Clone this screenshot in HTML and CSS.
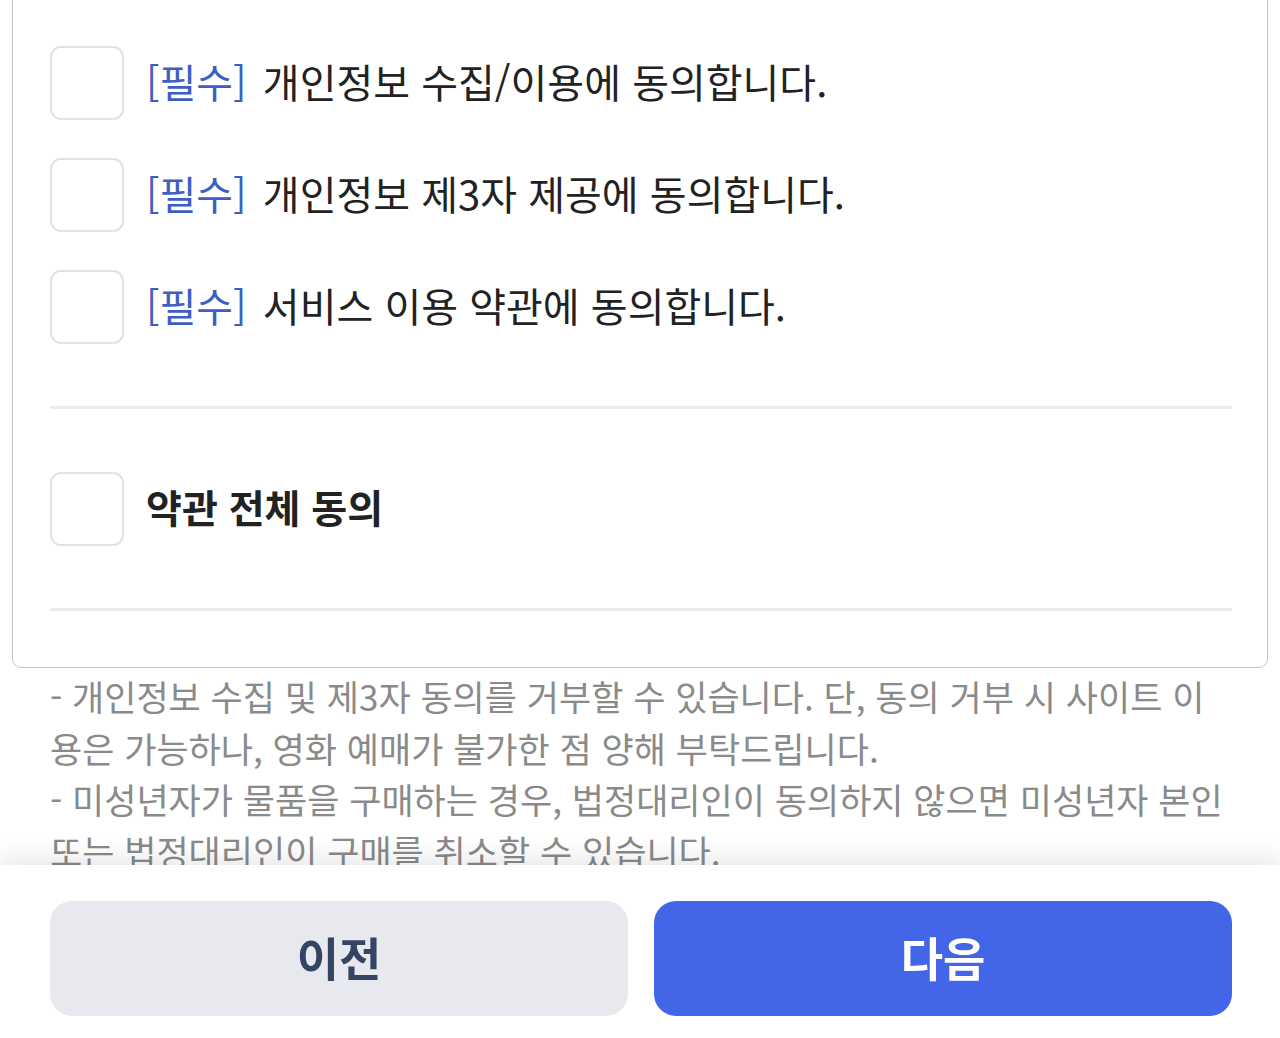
FILE: index.html
```html
<!DOCTYPE html>
<html lang="ko">

<head>
  <meta charset="UTF-8" />
  <meta name="viewport" content="width=device-width, initial-scale=1.0" />
  <title>약관 동의</title>
  <link rel="stylesheet" href="styles.css">
</head>

<body>

  <div class="terms-card">
    <ul class="terms-list">
      <li class="term">
        <span class="check"></span>
        <span class="term-text"><span class="required">[필수]</span> 개인정보 수집/이용에 동의합니다.</span>
      </li>
      <li class="term">
        <span class="check"></span>
        <span class="term-text"><span class="required">[필수]</span> 개인정보 제3자 제공에 동의합니다.</span>
      </li>
      <li class="term">
        <span class="check"></span>
        <span class="term-text"><span class="required">[필수]</span> 서비스 이용 약관에 동의합니다.</span>
      </li>
    </ul>

    <div class="divider"></div>

    <div class="term term-all">
      <span class="check"></span>
      <span class="term-text">약관 전체 동의</span>
    </div>

    <div class="divider last"></div>
  </div>

  <div class="notice">
    <p>- 개인정보 수집 및 제3자 동의를 거부할 수 있습니다. 단, 동의 거부 시 사이트 이용은 가능하나, 영화 예매가 불가한 점 양해 부탁드립니다.</p>
    <p>- 미성년자가 물품을 구매하는 경우, 법정대리인이 동의하지 않으면 미성년자 본인 또는 법정대리인이 구매를 취소할 수 있습니다.</p>
  </div>

  <!-- 하단 고정 버튼 -->
  <div class="footer">
    <button class="btn btn-prev">이전</button>
    <button class="btn btn-next">다음</button>
  </div>

</body>

</html>
```

FILE: styles.css
```css
/* 기본 */
* {
  margin: 0;
  padding: 0;
  box-sizing: border-box;
}

html,
body {
  height: 100%;
  overflow: hidden;
}

body {
  font-family: "Noto Sans CJK KR", "Noto Sans", sans-serif;
  background: #fff;
  color: #222;
}

/* 약관 카드 */
.terms-card {
  margin: -40px 12px 0 12px;
  padding: 85px 35px 56px 37px;
  border: 1.5px solid #c2c2c2;
  border-radius: 0 0 9px 9px;
}

.terms-list {
  list-style: none;
  display: flex;
  flex-direction: column;
  gap: 38px;
}

.term {
  display: flex;
  align-items: center;
  gap: 22px;
}

.check {
  width: 74px;
  height: 74px;
  flex-shrink: 0;
  border: 2px solid #e2e2e2;
  border-radius: 11px;
  background: #fff;
}

.term-text {
  font-size: 40px;
  line-height: 1;
  margin-top: -5px;
  color: #222;
}

.required {
  color: #3d5fc4;
  margin-right: 5px;
}

.term-all .term-text {
  font-size: 39px;
  font-weight: 700;
}

.divider {
  height: 3px;
  background: #ebebeb;
  margin: 62px 0 63px;
}

.divider.last {
  margin-bottom: 0;
  margin-top: 62px;
}

/* 안내 문구 */
.notice {
  margin-top: 2px;
  padding: 0 46px 0 50px;
  font-size: 35px;
  line-height: 51.5px;
  color: #8a8a8a;
}

/* 하단 버튼 */
.footer {
  position: fixed;
  left: 0;
  right: 0;
  bottom: 0;
  height: 173px;
  padding: 36px 48px 22px 50px;
  background: #fff;
  box-shadow: 0 -8px 22px rgba(0, 0, 0, 0.09);
  display: flex;
  gap: 26px;
}

.btn {
  flex: 1;
  border: none;
  border-radius: 22px;
  padding-bottom: 6px;
  font-family: inherit;
  font-size: 46px;
  font-weight: 700;
  cursor: pointer;
}

.btn-prev {
  background: #e8e9ee;
  color: #354463;
}

.btn-next {
  background: #4365e8;
  color: #fff;
}
```
